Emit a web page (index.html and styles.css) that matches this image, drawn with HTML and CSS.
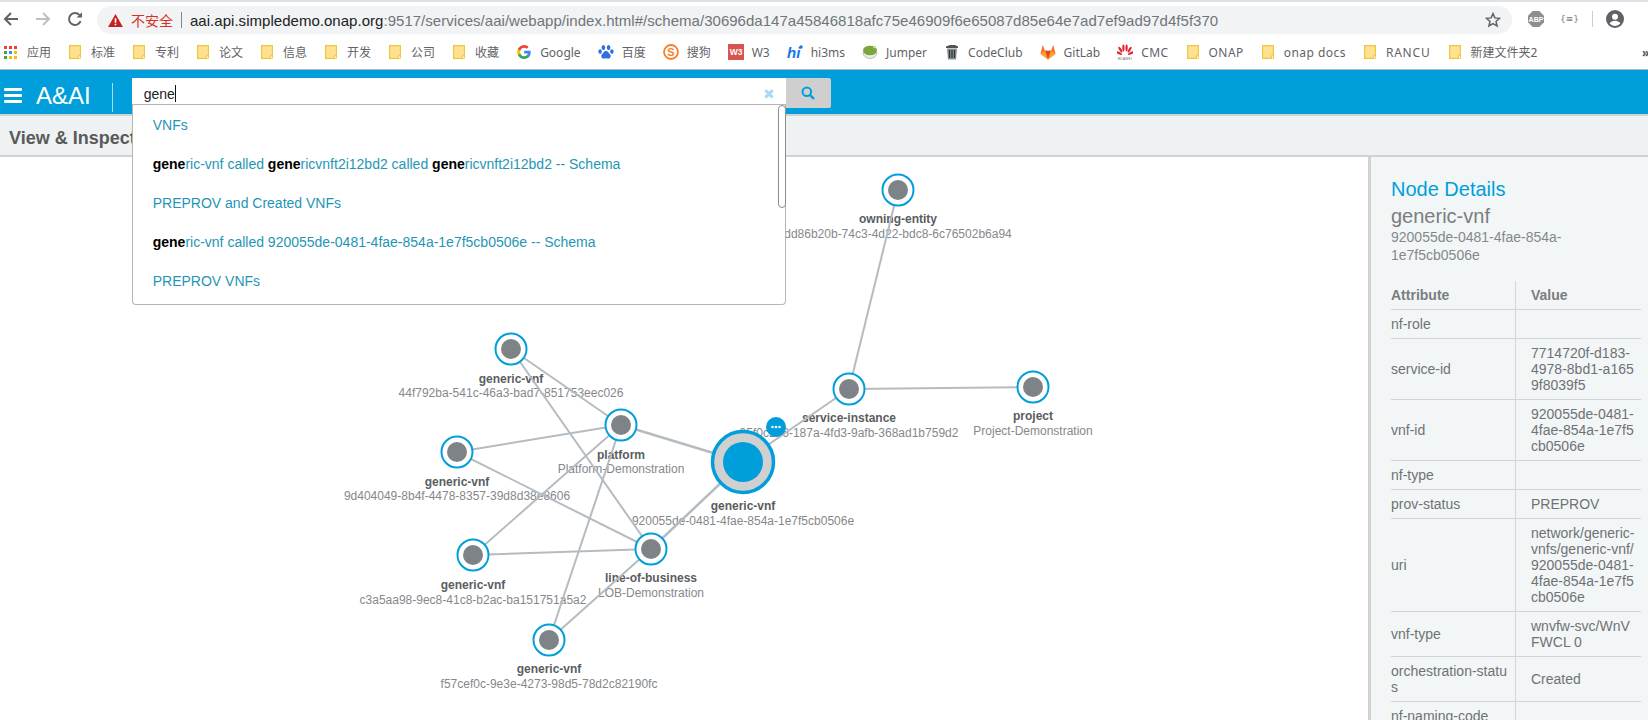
FILE: index.html
```html
<!DOCTYPE html>
<html lang="zh">
<head>
<meta charset="utf-8">
<title>A&amp;AI</title>
<link rel="stylesheet" href="styles.css">
</head>
<body>
<svg class="defs" width="0" height="0" aria-hidden="true">
  <symbol id="folder" viewBox="0 0 12 14">
    <path d="M.6.6h10.8v10.6h-2v2.2H.6z" fill="#ffe28f" stroke="#efc545" stroke-width="1.2"/>
    <rect x="9.4" y="11" width="2" height="2.4" fill="#fff" stroke="#efc545" stroke-width=".8"/>
  </symbol>
</svg>

<div class="tabstrip"></div>

<header class="toolbar">
  <div class="nav">
    <svg class="nav-icon" viewBox="0 0 16 16"><path d="M15 8H2M8 2 2 8l6 6" fill="none" stroke="#5f6368" stroke-width="2"/></svg>
    <svg class="nav-icon" viewBox="0 0 16 16"><path d="M1 8h13M8 2l6 6-6 6" fill="none" stroke="#bdc1c6" stroke-width="2"/></svg>
    <svg class="nav-icon" viewBox="0 0 16 16"><path d="M13.6 10.2A6 6 0 1 1 12.4 3.9" fill="none" stroke="#5f6368" stroke-width="2"/><path d="M9.6 6.6h5.4V1.2z" fill="#5f6368"/></svg>
  </div>
  <div class="omnibox">
    <svg class="warn" viewBox="0 0 16 14"><path d="M8 0 16 14H0z" fill="#c5221f"/><path d="M7.1 4.5h1.8v5H7.1zM7.1 10.5h1.8v1.7H7.1z" fill="#fff"/></svg>
    <span class="insecure">不安全</span>
    <span class="omni-sep"></span>
    <span class="url"><span class="host">aai.api.simpledemo.onap.org</span>:9517/services/aai/webapp/index.html#/schema/30696da147a45846818afc75e46909f6e65087d85e64e7ad7ef9ad97d4f5f370</span>
    <svg class="star" viewBox="0 0 16 16"><path d="m8 1.6 1.9 4.3 4.7.4-3.6 3.1 1.1 4.6L8 11.6 3.900 14l1.100-4.600L1.400 6.300l4.700-.4z" fill="none" stroke="#5f6368" stroke-width="1.500"/></svg>
  </div>
  <div class="extensions">
    <svg class="abp" viewBox="0 0 16 16"><path d="M4.700 0h6.600L16 4.700v6.600L11.300 16H4.700L0 11.300V4.700z" fill="#8f8f8f"/><text x="8" y="10.800" class="abp-text">ABP</text></svg>
    <span class="json-ext">{≡}</span>
    <span class="ext-sep"></span>
    <svg class="avatar" viewBox="0 0 18 18"><circle cx="9" cy="9" r="9" fill="#5f6368"/><circle cx="9" cy="6.800" r="3" fill="#fff"/><path d="M3.600 13.600c1-2 3.200-2.800 5.400-2.800s4.400.8 5.400 2.800A7 7 0 0 1 9 16a7 7 0 0 1-5.400-2.400z" fill="#fff"/></svg>
  </div>
</header>

<nav class="bookmarks">
  <a class="bm bm-apps">
    <svg class="bm-icon" viewBox="0 0 13 13">
      <rect width="3" height="3" fill="#ea4335"/><rect x="5" width="3" height="3" fill="#ea4335"/><rect x="10" width="3" height="3" fill="#ea4335"/>
      <rect y="5" width="3" height="3" fill="#34a853"/><rect x="5" y="5" width="3" height="3" fill="#4285f4"/><rect x="10" y="5" width="3" height="3" fill="#fbbc05"/>
      <rect y="10" width="3" height="3" fill="#34a853"/><rect x="5" y="10" width="3" height="3" fill="#fbbc05"/><rect x="10" y="10" width="3" height="3" fill="#fbbc05"/>
    </svg>应用</a>
  <a class="bm"><svg class="bm-folder"><use href="#folder"/></svg>标准</a>
  <a class="bm"><svg class="bm-folder"><use href="#folder"/></svg>专利</a>
  <a class="bm"><svg class="bm-folder"><use href="#folder"/></svg>论文</a>
  <a class="bm"><svg class="bm-folder"><use href="#folder"/></svg>信息</a>
  <a class="bm"><svg class="bm-folder"><use href="#folder"/></svg>开发</a>
  <a class="bm"><svg class="bm-folder"><use href="#folder"/></svg>公司</a>
  <a class="bm"><svg class="bm-folder"><use href="#folder"/></svg>收藏</a>
  <a class="bm">
    <svg class="bm-fav" viewBox="0 0 16 16">
      <path d="M14.700 8.200c0-.5 0-1-.1-1.400H8.100v2.700h3.700a3.200 3.200 0 0 1-1.400 2.100v1.700h2.300c1.300-1.200 2-3 2-5.100z" fill="#4285f4"/>
      <path d="M8.100 15c1.900 0 3.400-.6 4.600-1.700l-2.300-1.700c-.6.400-1.400.7-2.300.7-1.800 0-3.300-1.200-3.800-2.800H1.900v1.800A7 7 0 0 0 8.100 15z" fill="#34a853"/>
      <path d="M4.300 9.500a4.200 4.200 0 0 1 0-2.700V5H1.900a7 7 0 0 0 0 6.300z" fill="#fbbc05"/>
      <path d="M8.100 3.800c1 0 1.900.4 2.600 1l2-2A7 7 0 0 0 1.900 5l2.400 1.800c.5-1.700 2-3 3.800-3z" fill="#ea4335"/>
    </svg>Google</a>
  <a class="bm">
    <svg class="bm-fav" viewBox="0 0 16 16" fill="#2f6fe0">
      <ellipse cx="5.400" cy="3.400" rx="1.800" ry="2.500"/><ellipse cx="10.600" cy="3.400" rx="1.800" ry="2.500"/>
      <ellipse cx="2.100" cy="7.600" rx="1.700" ry="2.300"/><ellipse cx="13.900" cy="7.600" rx="1.700" ry="2.300"/>
      <path d="M8 7c-2.200 0-2.600 2-4 3.300-1.400 1.400-.7 4.500 1.700 4.300 1-.1 1.500-.4 2.300-.4s1.300.3 2.300.4c2.400.2 3.100-2.900 1.700-4.300C10.600 9 10.200 7 8 7z"/>
    </svg>百度</a>
  <a class="bm">
    <svg class="bm-fav" viewBox="0 0 16 16"><circle cx="8" cy="8" r="7" fill="#fff" stroke="#f7802a" stroke-width="1.800"/><text x="8" y="12" class="sogou-text">S</text></svg>搜狗</a>
  <a class="bm">
    <svg class="bm-fav" viewBox="0 0 16 16"><rect width="16" height="16" fill="#d9534f"/><text x="8" y="11.300" class="w3-text">W3</text></svg>W3</a>
  <a class="bm">
    <svg class="bm-fav" viewBox="0 0 16 16"><text x="0" y="13.500" class="hi-text">hi</text><circle cx="14" cy="3" r="1.700" fill="#1677e6"/></svg>hi3ms</a>
  <a class="bm">
    <svg class="bm-fav" viewBox="0 0 16 16"><path d="M1 8.500a7 6 0 0 0 14 0z" fill="#e8ece8" stroke="#a9b0a9" stroke-width=".8"/><ellipse cx="8" cy="6.500" rx="7" ry="4.800" fill="#7aa63c"/><circle cx="12.500" cy="3" r="1.300" fill="#cfe08f"/></svg>Jumper</a>
  <a class="bm">
    <svg class="bm-fav" viewBox="0 0 14 16"><path d="M1 2.500 5 1h5l3 1.500V4H1z" fill="#4d5459"/><path d="M2 4.500h10l-1 11H3z" fill="#8a9095"/><path d="M4.500 6v8M7 6v8M9.500 6v8" stroke="#2f3437" stroke-width="1.300"/></svg>CodeClub</a>
  <a class="bm">
    <svg class="bm-fav" viewBox="0 0 16 16"><path d="M8 15.500.5 9.800 2.700 1 5 6.800h6L13.300 1l2.200 8.800z" fill="#fc6d26"/><path d="M8 15.500 5 6.800h6z" fill="#e24329"/><path d="M8 15.500.5 9.800 5 6.800zM8 15.500l7.500-5.700L11 6.800z" fill="#fca326"/></svg>GitLab</a>
  <a class="bm bm-wide">
    <svg class="bm-fav" viewBox="0 0 16 16" fill="#e3202c">
      <ellipse cx="6.400" cy="4" rx="1.100" ry="3.400"/><ellipse cx="9.600" cy="4" rx="1.100" ry="3.400"/>
      <ellipse cx="6.400" cy="4" rx="1.100" ry="3.400" transform="rotate(-30 8 10.500)"/><ellipse cx="9.600" cy="4" rx="1.100" ry="3.400" transform="rotate(30 8 10.500)"/>
      <ellipse cx="6.400" cy="4.500" rx="1.100" ry="3.400" transform="rotate(-62 8 10.500)"/><ellipse cx="9.600" cy="4.500" rx="1.100" ry="3.400" transform="rotate(62 8 10.500)"/>
      <text x="8" y="15.600" class="hw-text">HUAWEI</text>
    </svg>CMC</a>
  <a class="bm bm-wide"><svg class="bm-folder"><use href="#folder"/></svg>ONAP</a>
  <a class="bm bm-wide"><svg class="bm-folder"><use href="#folder"/></svg>onap docs</a>
  <a class="bm bm-wider"><svg class="bm-folder"><use href="#folder"/></svg>RANCU</a>
  <a class="bm"><svg class="bm-folder"><use href="#folder"/></svg>新建文件夹2</a>
  <span class="bm-more">»</span>
</nav>

<div class="app-header">
  <div class="burger"><span></span><span></span><span></span></div>
  <span class="brand">A&amp;AI</span>
  <span class="brand-sep"></span>
  <div class="search">
    <div class="search-input">
      <span class="typed">gene</span><span class="caret"></span>
      <span class="clear">✖</span>
    </div>
    <button class="search-btn" type="button">
      <svg viewBox="0 0 14 14" width="14" height="14"><circle cx="5.800" cy="5.800" r="4.300" fill="none" stroke="#009fdb" stroke-width="2"/><path d="m9 9 4 4" stroke="#009fdb" stroke-width="2.400"/></svg>
    </button>
    <ul class="suggestions">
      <li>VNFs</li>
      <li><b>gene</b>ric-vnf called <b>gene</b>ricvnft2i12bd2 called <b>gene</b>ricvnft2i12bd2 -- Schema</li>
      <li>PREPROV and Created VNFs</li>
      <li><b>gene</b>ric-vnf called 920055de-0481-4fae-854a-1e7f5cb0506e -- Schema</li>
      <li>PREPROV VNFs</li>
    </ul>
    <span class="sugg-thumb"></span>
  </div>
</div>

<div class="subbar">View &amp; Inspect</div>

<main class="content">
  <svg class="graph" viewBox="0 157 1368 563">
    <g class="labels">
      <text x="511" y="383" class="n">generic-vnf</text><text x="511" y="397" class="d">44f792ba-541c-46a3-bad7-851753eec026</text>
      <text x="621" y="459" class="n">platform</text><text x="621" y="473" class="d">Platform-Demonstration</text>
      <text x="457" y="486" class="n">generic-vnf</text><text x="457" y="500" class="d">9d404049-8b4f-4478-8357-39d8d38e8606</text>
      <text x="473" y="589" class="n">generic-vnf</text><text x="473" y="604" class="d">c3a5aa98-9ec8-41c8-b2ac-ba151751a5a2</text>
      <text x="651" y="582" class="n">line-of-business</text><text x="651" y="597" class="d">LOB-Demonstration</text>
      <text x="549" y="673" class="n">generic-vnf</text><text x="549" y="688" class="d">f57cef0c-9e3e-4273-98d5-78d2c82190fc</text>
      <text x="743" y="510" class="n">generic-vnf</text><text x="743" y="525" class="d">920055de-0481-4fae-854a-1e7f5cb0506e</text>
      <text x="849" y="422" class="n">service-instance</text><text x="849" y="437" class="d">95f0c2e6-187a-4fd3-9afb-368ad1b759d2</text>
      <text x="1033" y="420" class="n">project</text><text x="1033" y="435" class="d">Project-Demonstration</text>
      <text x="898" y="223" class="n">owning-entity</text><text x="898" y="238" class="d">dd86b20b-74c3-4d22-bdc8-6c76502b6a94</text>
    </g>
    <g class="edges">
      <path d="M898 190 849 389"/><path d="M849 389 1033 387"/><path d="M849 389 743 462"/>
      <path d="M743 462 621 425" class="thick"/><path d="M743 462 651 549" class="thick"/>
      <path d="M621 425 511 349"/><path d="M621 425 457 452"/><path d="M621 425 473 555"/><path d="M621 425 549 640"/>
      <path d="M651 549 511 349"/><path d="M651 549 457 452"/><path d="M651 549 473 555"/><path d="M651 549 549 640"/>
    </g>
    <g class="nodes">
      <g transform="translate(511 349)"><circle r="15.500" class="ring"/><circle r="10" class="core"/></g>
      <g transform="translate(621 425)"><circle r="15.500" class="ring"/><circle r="10" class="core"/></g>
      <g transform="translate(457 452)"><circle r="15.500" class="ring"/><circle r="10" class="core"/></g>
      <g transform="translate(473 555)"><circle r="15.500" class="ring"/><circle r="10" class="core"/></g>
      <g transform="translate(651 549)"><circle r="15.500" class="ring"/><circle r="10" class="core"/></g>
      <g transform="translate(549 640)"><circle r="15.500" class="ring"/><circle r="10" class="core"/></g>
      <g transform="translate(849 389)"><circle r="15.500" class="ring"/><circle r="10" class="core"/></g>
      <g transform="translate(1033 387)"><circle r="15.500" class="ring"/><circle r="10" class="core"/></g>
      <g transform="translate(898 190)"><circle r="15.500" class="ring"/><circle r="10" class="core"/></g>
      <g transform="translate(743 462)"><circle r="30.500" class="ring-main"/><circle r="20" class="core-main"/></g>
      <g transform="translate(776 427)"><circle r="10" class="badge"/><circle cx="-3.500" r="1.300" class="dot"/><circle r="1.300" class="dot"/><circle cx="3.500" r="1.300" class="dot"/></g>
    </g>
  </svg>

  <aside class="details">
    <h2 class="details-title">Node Details</h2>
    <h3 class="details-type">generic-vnf</h3>
    <p class="details-id">920055de-0481-4fae-854a-1e7f5cb0506e</p>
    <table class="attrs">
      <thead><tr><th>Attribute</th><th>Value</th></tr></thead>
      <tbody>
        <tr><td>nf-role</td><td></td></tr>
        <tr><td>service-id</td><td>7714720f-d183-4978-8bd1-a1659f8039f5</td></tr>
        <tr><td>vnf-id</td><td>920055de-0481-4fae-854a-1e7f5cb0506e</td></tr>
        <tr><td>nf-type</td><td></td></tr>
        <tr><td>prov-status</td><td>PREPROV</td></tr>
        <tr><td>uri</td><td>network/generic-vnfs/generic-vnf/920055de-0481-4fae-854a-1e7f5cb0506e</td></tr>
        <tr><td>vnf-type</td><td>wnvfw-svc/WnVFWCL 0</td></tr>
        <tr><td>orchestration-status</td><td>Created</td></tr>
        <tr><td>nf-naming-code</td><td></td></tr>
      </tbody>
    </table>
  </aside>
</main>
</body>
</html>
```

FILE: styles.css
```css
* { box-sizing: border-box; }
html, body { margin: 0; height: 720px; overflow: hidden; }
body {
  display: flex;
  flex-direction: column;
  width: 1648px;
  background: #fff;
  font-family: "Liberation Sans", Arial, sans-serif;
  color: #6f7275;
}
.defs { position: absolute; }

.tabstrip { height: 2px; flex: none; background: #dee1e6; }

.toolbar {
  flex: none;
  height: 34px;
  display: flex;
  align-items: center;
  background: #fff;
}
.nav { display: flex; align-items: center; gap: 16px; padding-left: 3px; width: 97px; }
.nav-icon { width: 16px; height: 16px; }
.omnibox {
  width: 1415px;
  height: 28px;
  margin-top: 2px;
  display: flex;
  align-items: center;
  background: #f1f3f4;
  border-radius: 14px;
  padding: 0 11px 0 11px;
}
.warn { width: 15px; height: 13px; flex: none; }
.insecure { margin-left: 8px; font: 14px "Noto Sans CJK SC", sans-serif; color: #d93025; }
.omni-sep { width: 1px; height: 16px; margin: 0 8px; background: #80868b; }
.url {
  flex: 1;
  white-space: nowrap;
  overflow: hidden;
  font: 15px "Liberation Sans", sans-serif;
  letter-spacing: .03px;
  color: #70757a;
}
.host { color: #202124; }
.star { width: 16px; height: 16px; flex: none; }

.extensions { flex: 1; position: relative; display: flex; align-items: center; padding-left: 16px; }
.abp { width: 16px; height: 16px; }
.abp-text { font: bold 7px "Liberation Sans", sans-serif; fill: #fff; text-anchor: middle; }
.json-ext { margin-left: 16px; width: 16px; font: 9px "DejaVu Sans", sans-serif; color: #777; white-space: nowrap; }
.ext-sep { width: 1px; height: 16px; margin-left: 16px; background: #ccc; }
.avatar { width: 18px; height: 18px; margin-left: 13px; }

.bookmarks {
  flex: none;
  height: 34px;
  display: flex;
  align-items: center;
  gap: 18px;
  padding: 0 0 1px 4px;
  background: #fff;
  border-bottom: 1px solid #b4b4b4;
  font: 12px "Noto Sans", "Noto Sans CJK SC", sans-serif;
  color: #5f6368;
  white-space: nowrap;
  position: relative;
}
.bm { display: flex; align-items: center; gap: 10px; }
.bm-wide { letter-spacing: .45px; }
.bm-wider { letter-spacing: .8px; }
.bm-icon { width: 13px; height: 13px; }
.bm-folder { width: 12px; height: 14px; }
.bm-fav { width: 16px; height: 16px; margin-right: -2px; margin-left: -1px; }
.sogou-text { font: bold 11px "Liberation Sans", sans-serif; fill: #f7802a; text-anchor: middle; }
.w3-text { font: bold 8.500px "Liberation Sans", sans-serif; fill: #fff; text-anchor: middle; }
.hi-text { font: italic bold 15px "Liberation Sans", sans-serif; fill: #1677e6; }
.hw-text { font: 3px "Liberation Sans", sans-serif; fill: #555; text-anchor: middle; }
.bm-more { position: absolute; left: 1642px; top: 8px; font-weight: 700; color: #555; }

.app-header {
  flex: none;
  height: 44px;
  display: flex;
  align-items: center;
  background: #009fdb;
  color: #fff;
}
.burger { display: flex; flex-direction: column; gap: 3px; margin: 7px 0 0 4px; width: 18px; }
.burger span { height: 3px; border-radius: 1px; background: #fff; }
.brand { margin: 8px 0 0 14px; font-size: 24px; line-height: 28px; }
.brand-sep { width: 1px; height: 29px; margin: 10px 0 0 21px; background: rgba(255,255,255,.65); }

.search { position: relative; display: flex; margin: 8px 0 0 19px; align-self: flex-start; }
.search-input {
  width: 654px;
  height: 27px;
  display: flex;
  align-items: center;
  padding: 5px 0 0 12px;
  background: #fff;
  border-bottom: 1px solid #b5b5b5;
  font-size: 14px;
  color: #222;
}
.caret { width: 1px; height: 17px; background: #111; }
.clear { margin-left: auto; margin-right: 11px; font: 14px "DejaVu Sans", sans-serif; color: #a6dcf2; }
.search-btn {
  width: 45px;
  height: 30px;
  padding: 0;
  display: flex;
  align-items: center;
  justify-content: center;
  border: 0;
  border-radius: 0 2px 2px 0;
  background: #cfcfcf;
}
.suggestions {
  position: absolute;
  left: 0;
  top: 27px;
  width: 654px;
  height: 200px;
  margin: 0;
  padding: 1px 0 0 20px;
  list-style: none;
  background: #fff;
  border: 1px solid #b5b5b5;
  border-top: 0;
  border-radius: 0 0 4px 4px;
  font-size: 14px;
  color: #1f96b5;
  z-index: 5;
}
.suggestions li { height: 39px; line-height: 39px; white-space: nowrap; }
.suggestions b { color: #000; }
.sugg-thumb {
  position: absolute;
  left: 646px;
  top: 27px;
  width: 8px;
  height: 103px;
  background: #fff;
  border: 1px solid #8b8f92;
  border-radius: 4px;
  z-index: 6;
}

.subbar {
  flex: none;
  height: 43px;
  padding: 5px 8px 0 9px;
  display: flex;
  align-items: center;
  background: #eef2f3;
  border-top: 2px solid #d2d2d2;
  border-bottom: 2px solid #d2d2d2;
  font-size: 18px;
  font-weight: 700;
  color: #5a5a5a;
}

.content { flex: 1; min-height: 0; display: flex; }
.graph { flex: none; width: 1368px; height: 563px; display: block; }
.labels text { text-anchor: middle; font-size: 12px; font-family: "Liberation Sans", sans-serif; }
.n { font-weight: 700; fill: #5a5d60; }
.d { fill: #85888b; }
.edges path { stroke: #b5bcc1; stroke-width: 2; fill: none; }
.edges .thick { stroke-width: 2.500; }
.ring { fill: #fff; stroke: #009fdb; stroke-width: 2; }
.core { fill: #7e8387; }
.ring-main { fill: #d0d0d0; stroke: #009fdb; stroke-width: 3.500; }
.core-main { fill: #009fdb; }
.badge { fill: #009fdb; }
.dot { fill: #fff; }

.details {
  flex: 1;
  overflow: hidden;
  padding: 20px 7px 0 20px;
  background: #f2f6f7;
  border-left: 3px solid #d2d2d2;
  color: #6f7275;
}
.details-title { margin: 0; font-size: 20px; line-height: 24px; font-weight: 400; color: #009fdb; }
.details-type { margin: 3px 0 0; font-size: 20px; line-height: 24px; font-weight: 400; color: #7a7d80; }
.details-id { margin: 0; font-size: 14px; line-height: 18px; width: 190px; color: #85888b; }
.attrs {
  width: 250px;
  margin-top: 17px;
  border-collapse: collapse;
  table-layout: fixed;
  font-size: 14px;
  line-height: 16px;
}
.attrs th, .attrs td { padding: 6px 5px 6px 0; border-bottom: 1px solid #d2d4d6; text-align: left; word-break: break-all; }
.attrs th:first-child, .attrs td:first-child { width: 124px; }
.attrs th + th, .attrs td + td { padding-left: 15.500px; padding-right: 4.500px; border-left: 1px solid #d2d4d6; }
.attrs th { font-weight: 700; color: #7a7d80; }
.attrs td { color: #6f7275; }
```
